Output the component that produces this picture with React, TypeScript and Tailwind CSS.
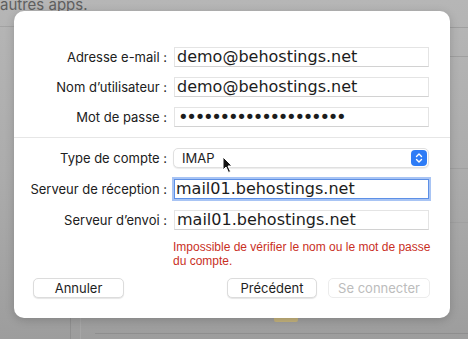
import React from "react";

const labelCls =
  "text-right text-[13px] leading-[20px] text-[#202020] whitespace-nowrap";
const fieldCls =
  "h-[20px] bg-white border border-[#e4e4e4] border-b-[#d2d2d2] pl-[2px] text-[16px] leading-[18px] text-[#1c1c1c] whitespace-nowrap overflow-hidden";

function Field({ label, children, focused }: { label: string; children: React.ReactNode; focused?: boolean }) {
  return (
    <div className="flex items-center">
      <div className={`w-[153px] ${labelCls}`}>{label}</div>
      <div className="w-[7px]" />
      {focused ? (
        <div
          className="w-[255px] h-[20px] bg-white border border-[#5d90e6] shadow-[0_0_0_2px_#a8c4f4] pl-[1px] text-[16px] leading-[18px] text-[#1c1c1c] whitespace-nowrap overflow-hidden"
          style={{ fontFamily: '"DejaVu Sans", sans-serif' }}
        >
          {children}
        </div>
      ) : (
        <div className={`w-[255px] ${fieldCls}`} style={{ fontFamily: '"DejaVu Sans", sans-serif' }}>
          {children}
        </div>
      )}
    </div>
  );
}

export default function App() {
  return (
    <div
      className="relative w-[468px] h-[339px] overflow-hidden bg-gradient-to-b from-[#b6b6b6] via-[#acacac] to-[#9d9d9d]"
      style={{ fontFamily: 'Inter, "Liberation Sans", sans-serif' }}
    >
      {/* background window content */}
      <div className="absolute left-0 top-[-4px] text-[15px] text-[#5f5f5f] leading-[18px]">autres apps.</div>
      <div className="absolute left-0 top-[26px] w-[14px] h-px bg-[#a3a3a3]" />
      <div className="absolute right-0 top-[27px] w-[18px] h-px bg-[#9f9f9f]" />
      <div className="absolute right-0 top-[56px] w-[18px] h-px bg-[#9f9f9f]" />
      <div className="absolute right-0 top-[168px] w-[18px] h-px bg-[#a0a0a0]" />
      <div className="absolute right-0 top-[222px] w-[18px] h-px bg-[#a0a0a0]" />
      <div className="absolute left-[70px] top-[318px] w-px h-[21px] bg-[#8f8f8f]" />
      <div className="absolute left-[80px] top-[318px] w-px h-[21px] bg-[#a6a6a6]" />
      <div className="absolute left-[95px] top-[333px] w-[373px] h-px bg-[#8e8e8e]" />
      <div className="absolute left-[274px] top-[316px] w-[24px] h-[6px] rounded-b-[2px] bg-[#c4b27c]" />

      <div className="pt-[11px] pl-[14px]">
        <div className="relative w-[436px] h-[307px] bg-white rounded-[10px] shadow-[0_2px_10px_rgba(0,0,0,0.18)] flex flex-col">
          <div className="pt-[36px] flex flex-col gap-[10px]">
            <Field label="Adresse e-mail :">demo@behostings.net</Field>
            <Field label="Nom d’utilisateur :">demo@behostings.net</Field>
            <Field label="Mot de passe :">
              <span className="text-[18px] leading-[18px] tracking-[-2.3px] text-[#1c1c1c] relative left-[1px]">
                ••••••••••••••••••••
              </span>
            </Field>
          </div>

          <div className="mt-[10px] h-px bg-[#e6e6e6]" />

          <div className="pt-[10px] flex flex-col gap-[11px]">
            <div className="flex items-center">
              <div className={`w-[153px] ${labelCls}`}>Type de compte :</div>
              <div className="w-[6px]" />
              <div className="w-[256px] h-[20px] rounded-[5px] bg-white border border-[#e0e0e0] shadow-[0_1px_1px_rgba(0,0,0,0.08)] flex items-center justify-between pl-[8px] pr-px">
                <span className="text-[13px] text-[#1e1e1e] leading-[16px] -mt-[1px]">IMAP</span>
                <div className="w-[16px] h-[16px] rounded-[4px] bg-[#2e7cf6] flex items-center justify-center">
                  <svg width="10" height="12" viewBox="0 0 10 12" fill="none">
                    <path d="M2.5 4.5 L5 2 L7.5 4.5" stroke="white" strokeWidth="1.4" strokeLinecap="round" strokeLinejoin="round" />
                    <path d="M2.5 7.5 L5 10 L7.5 7.5" stroke="white" strokeWidth="1.4" strokeLinecap="round" strokeLinejoin="round" />
                  </svg>
                </div>
              </div>
            </div>
            <Field label="Serveur de réception :" focused>
              mail01.behostings.net
            </Field>
            <Field label="Serveur d’envoi :">mail01.behostings.net</Field>
          </div>

          <div
            className="mt-[10px] ml-[159px] w-[262px] text-[12px] leading-[14px] text-[#c92f1f]"
            style={{ fontFamily: '"Liberation Sans", Arial, sans-serif' }}
          >
            Impossible de vérifier le nom ou le mot de passe du compte.
          </div>

          <div className="mt-[10px] flex items-center pl-[19px]">
            <button className="w-[91px] h-[20px] rounded-[5px] bg-white border border-[#dcdcdc] shadow-[0_1px_1px_rgba(0,0,0,0.1)] text-[13px] leading-[18px] text-[#1e1e1e]">
              Annuler
            </button>
            <div className="w-[103px]" />
            <button className="w-[90px] h-[20px] rounded-[5px] bg-white border border-[#dcdcdc] shadow-[0_1px_1px_rgba(0,0,0,0.1)] text-[13px] leading-[18px] text-[#1e1e1e]">
              Précédent
            </button>
            <div className="w-[11px]" />
            <button className="w-[102px] h-[20px] rounded-[5px] bg-white border border-[#ececec] text-[13px] leading-[18px] text-[#bcbcbc]">
              Se connecter
            </button>
          </div>

          {/* mouse cursor */}
          <svg className="absolute left-[208px] top-[145px]" width="12" height="18" viewBox="0 0 12 18">
            <path d="M1 1 L1 14 L4 11 L6.5 16.5 L8.5 15.5 L6 10 L10 10 Z" fill="#111" stroke="white" strokeWidth="1" strokeLinejoin="round" />
          </svg>
        </div>
      </div>
    </div>
  );
}
